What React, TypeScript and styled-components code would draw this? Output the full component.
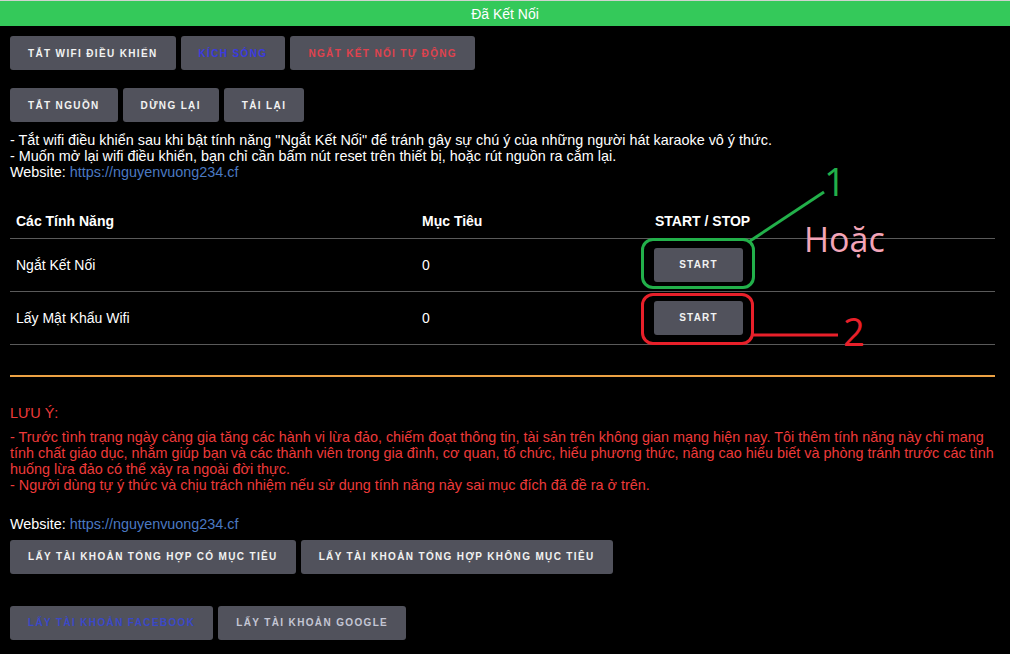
import React from "react";
import styled, { createGlobalStyle } from "styled-components";

const Global = createGlobalStyle`
  html, body { margin: 0; padding: 0; background: #000; }
  body { font-family: "Liberation Sans", Arial, sans-serif; color: #fff; width: 1010px; height: 654px; overflow: hidden; }
`;

const Header = styled.div`
  height: 25px;
  border-top: 1px solid #cfd3cf;
  background: #34c95a;
  color: #fff;
  font-size: 14px;
  display: flex;
  align-items: center;
  justify-content: center;
`;

const Content = styled.div`
  padding: 0 15px 0 10px;
`;

const BtnRow = styled.div<{ $mt: number }>`
  display: flex;
  gap: 5px;
  margin-top: ${(p) => p.$mt}px;
`;

const Btn = styled.button<{ $color?: string }>`
  height: 34px;
  padding: 0 18px;
  background: #51525c;
  border: none;
  border-radius: 3px;
  color: ${(p) => p.$color || "#f2f2f2"};
  font-family: "Liberation Sans", Arial, sans-serif;
  font-weight: bold;
  font-size: 10px;
  letter-spacing: 1.35px;
  text-transform: uppercase;
  white-space: nowrap;
`;

const Info = styled.div<{ $mt: number; $color?: string }>`
  margin-top: ${(p) => p.$mt}px;
  font-size: 14.4px;
  line-height: 16px;
  color: ${(p) => p.$color || "#fff"};
`;

const Link = styled.a`
  color: #4b79c2;
  text-decoration: none;
`;

const Table = styled.table`
  margin-top: 20px;
  width: 985px;
  border-collapse: collapse;
  font-size: 14px;
`;

const Th = styled.th<{ $w?: number }>`
  text-align: left;
  height: 38px;
  padding: 5px 6px 0;
  box-sizing: border-box;
  font-weight: bold;
  border-bottom: 1px solid #5a5a5a;
  ${(p) => (p.$w ? `width: ${p.$w}px;` : "")}
  vertical-align: middle;
`;

const Td = styled.td`
  height: 52px;
  padding: 0 6px;
  border-bottom: 1px solid #5a5a5a;
  vertical-align: middle;
`;

const StartBtn = styled.button`
  width: 89px;
  height: 34px;
  background: #51525c;
  border: none;
  border-radius: 3px;
  color: #f2f2f2;
  font-family: "Liberation Sans", Arial, sans-serif;
  font-weight: bold;
  font-size: 10px;
  letter-spacing: 1.2px;
  margin-left: -1px;
`;

const Divider = styled.div`
  margin-top: 30px;
  height: 2px;
  background: #eca244;
  width: 985px;
`;

const Note = styled.div`
  margin-top: 28px;
  font-size: 14.4px;
  line-height: 16px;
  color: #ee3a3a;
`;

const Mark = styled.div<{ $c: string; $x: number; $y: number; $w: number; $h: number }>`
  position: absolute;
  left: ${(p) => p.$x}px;
  top: ${(p) => p.$y}px;
  width: ${(p) => p.$w}px;
  height: ${(p) => p.$h}px;
  border: 3px solid ${(p) => p.$c};
  border-radius: 12px;
  box-sizing: border-box;
`;

const Label = styled.div<{ $c: string; $x: number; $y: number; $s: number }>`
  position: absolute;
  left: ${(p) => p.$x}px;
  top: ${(p) => p.$y}px;
  color: ${(p) => p.$c};
  font-family: "Open Sans", "Noto Sans", sans-serif;
  font-size: ${(p) => p.$s}px;
  line-height: 1;
`;

const Lines = styled.svg`
  position: absolute;
  left: 0;
  top: 0;
  pointer-events: none;
`;

const Page = styled.div`
  position: relative;
`;

export default function App() {
  return (
    <Page>
      <Global />
      <Header>Đã Kết Nối</Header>
      <Content>
        <BtnRow $mt={10}>
          <Btn>Tắt wifi điều khiển</Btn>
          <Btn $color="#3a3ae0">Kích sóng</Btn>
          <Btn $color="#e0424e">Ngắt kết nối tự động</Btn>
        </BtnRow>
        <BtnRow $mt={18}>
          <Btn>Tắt nguồn</Btn>
          <Btn>Dừng lại</Btn>
          <Btn>Tải lại</Btn>
        </BtnRow>
        <Info $mt={10}>
          - Tắt wifi điều khiển sau khi bật tính năng "Ngắt Kết Nối" để tránh gây sự chú ý của những người hát karaoke vô ý thức.
          <br />- Muốn mở lại wifi điều khiển, bạn chỉ cần bấm nút reset trên thiết bị, hoặc rút nguồn ra cắm lại.
          <br />Website: <Link href="#">https://nguyenvuong234.cf</Link>
        </Info>
        <Table>
          <thead>
            <tr>
              <Th $w={406}>Các Tính Năng</Th>
              <Th $w={233}>Mục Tiêu</Th>
              <Th>START / STOP</Th>
            </tr>
          </thead>
          <tbody>
            <tr>
              <Td>Ngắt Kết Nối</Td>
              <Td>0</Td>
              <Td>
                <StartBtn>START</StartBtn>
              </Td>
            </tr>
            <tr>
              <Td>Lấy Mật Khẩu Wifi</Td>
              <Td>0</Td>
              <Td>
                <StartBtn>START</StartBtn>
              </Td>
            </tr>
          </tbody>
        </Table>
        <Divider />
        <Note>
          LƯU Ý:
          <Info $mt={8} $color="#ee3a3a">
            - Trước tình trạng ngày càng gia tăng các hành vi lừa đảo, chiếm đoạt thông tin, tài sản trên không gian mạng hiện nay. Tôi thêm tính năng này chỉ mang tính chất giáo dục, nhằm giúp bạn và các thành viên trong gia đình, cơ quan, tổ chức, hiểu phương thức, nâng cao hiểu biết và phòng tránh trước các tình huống lừa đảo có thể xảy ra ngoài đời thực.
            <br />- Người dùng tự ý thức và chịu trách nhiệm nếu sử dụng tính năng này sai mục đích đã đề ra ở trên.
          </Info>
        </Note>
        <Info $mt={23}>
          Website: <Link href="#">https://nguyenvuong234.cf</Link>
        </Info>
        <BtnRow $mt={8}>
          <Btn>Lấy tài khoản tổng hợp có mục tiêu</Btn>
          <Btn>Lấy tài khoản tổng hợp không mục tiêu</Btn>
        </BtnRow>
        <BtnRow $mt={32}>
          <Btn $color="#3a48c8">Lấy tài khoản facebook</Btn>
          <Btn $color="#c4c6d4">Lấy tài khoản google</Btn>
        </BtnRow>
      </Content>
      <Mark $c="#22b04a" $x={641} $y={238} $w={114} $h={51} />
      <Mark $c="#e8202a" $x={641} $y={293} $w={113} $h={52} />
      <Lines width="1010" height="654">
        <line x1="750" y1="241" x2="824" y2="192" stroke="#22b04a" strokeWidth="3" />
        <line x1="753" y1="335" x2="838" y2="335" stroke="#e8202a" strokeWidth="3" />
      </Lines>
      <Label $c="#22b04a" $x={824} $y={162} $s={38}>1</Label>
      <Label $c="#f4a5b8" $x={804} $y={222} $s={34}>Hoặc</Label>
      <Label $c="#e8202a" $x={843} $y={312} $s={38}>2</Label>
    </Page>
  );
}
